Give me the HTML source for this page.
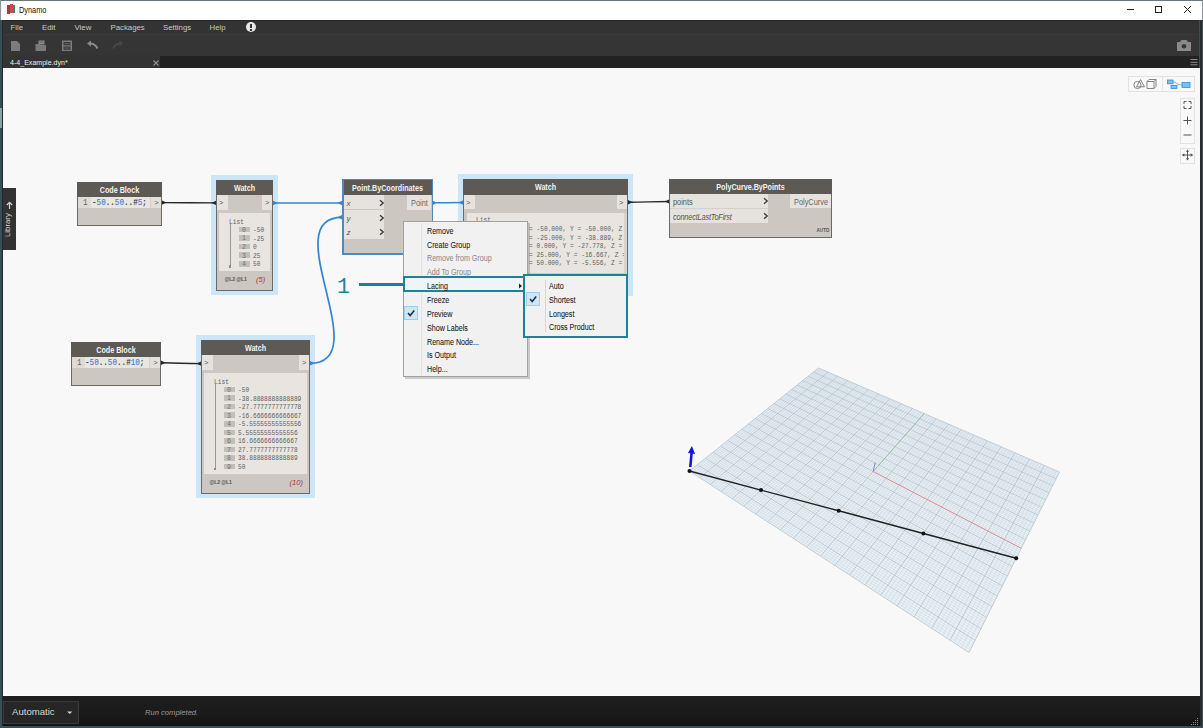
<!DOCTYPE html><html><head><meta charset="utf-8"><style>
*{margin:0;padding:0;box-sizing:border-box}
html,body{width:1203px;height:728px;overflow:hidden;background:#3b4d55;font-family:"Liberation Sans", sans-serif}
.a{position:absolute}
.t{position:absolute;white-space:nowrap;line-height:1}
.node{position:absolute;background:#ccc8c1;border:1px solid #6e6c69}
.hdr{position:absolute;left:0;top:0;right:0;background:#5d5a56;color:#f4f4f4;font-weight:bold;text-align:center;white-space:nowrap}
.port{position:absolute;background:#e6e3de;color:#555;white-space:nowrap}
.menu .it{position:absolute;left:24px;font-size:7.6px;color:#1a1a1a;white-space:nowrap;line-height:1}
</style></head><body>
<div class="a" style="left:0;top:0;width:1203px;height:20px;background:#fff;border-top:1px solid #6a7882;border-left:1px solid #8a98a2;border-right:1px solid #8a98a2"></div>
<div class="a" style="left:7px;top:5px;width:3px;height:9px;background:#b5343a"></div>
<div class="a" style="left:10px;top:4px;width:3px;height:9px;background:#c94b4f"></div>
<div class="a" style="left:13px;top:5px;width:2px;height:8px;background:#2f8a6a"></div>
<div class="t" style="left:19px;top:6.8px;font-size:8.2px;color:#111;transform-origin:0 0;transform:scaleX(0.9)">Dynamo</div>
<div class="a" style="left:1127px;top:9px;width:7px;height:1px;background:#222"></div>
<div class="a" style="left:1155px;top:6px;width:7px;height:7px;border:1px solid #222"></div>
<svg class="a" style="left:1183px;top:5px" width="9" height="9"><path d="M1 1L8 8M8 1L1 8" stroke="#222" stroke-width="1"/></svg>
<div class="a" style="left:3px;top:20px;width:1196px;height:14px;background:#333333"></div>
<div class="t" style="left:10.5px;top:23.5px;font-size:7.8px;color:#c8c8c8">File</div>
<div class="t" style="left:42px;top:23.5px;font-size:7.8px;color:#c8c8c8">Edit</div>
<div class="t" style="left:74.5px;top:23.5px;font-size:7.8px;color:#c8c8c8">View</div>
<div class="t" style="left:110.5px;top:23.5px;font-size:7.8px;color:#c8c8c8">Packages</div>
<div class="t" style="left:163px;top:23.5px;font-size:7.8px;color:#c8c8c8">Settings</div>
<div class="t" style="left:209.5px;top:23.5px;font-size:7.8px;color:#c8c8c8">Help</div>
<div class="a" style="left:246px;top:22px;width:10px;height:10px;border-radius:50%;background:#e8e8e8"></div>
<div class="a" style="left:250.3px;top:24px;width:1.6px;height:4px;background:#333"></div>
<div class="a" style="left:250.3px;top:29px;width:1.6px;height:1.5px;background:#333"></div>
<div class="a" style="left:3px;top:34px;width:1196px;height:22px;background:#353535"></div>
<div class="a" style="left:3px;top:34px;width:1196px;height:1px;background:#3b3b3b"></div>
<div class="a" style="left:3px;top:20px;width:1196px;height:1px;background:#262626"></div>
<svg class="a" style="left:0;top:34px" width="140" height="22"><path d="M11 7H17L20 10V17H11Z" fill="#7c7c7c"/><path d="M35.5 10H39.5L40.5 11H46V17H35.5Z" fill="#7a7a7a"/><path d="M38.5 6.5H44.5V10.5H38.5Z" fill="#8a8a8a"/><path d="M39.5 8H43.5" stroke="#555" stroke-width="0.7"/><rect x="62" y="6.5" width="10" height="10.5" fill="#7c7c7c"/><rect x="63.5" y="8" width="7" height="3.3" fill="#3a3a3a"/><rect x="63.5" y="12.5" width="7" height="3.3" fill="#3a3a3a"/><path d="M64.5 9.6H69.5M64.5 14.1H69.5" stroke="#6a6a6a" stroke-width="0.8"/><path d="M97.5 14.5C96 11 93 9.5 89.5 9.5" fill="none" stroke="#8a8a8a" stroke-width="2"/><path d="M87 9.5L91 6.5V12.5Z" fill="#8a8a8a"/><path d="M113 14.5C114.5 11 117.5 9.5 121 9.5" fill="none" stroke="#484848" stroke-width="2"/><path d="M123.5 9.5L119.5 6.5V12.5Z" fill="#484848"/></svg>
<svg class="a" style="left:1176px;top:39px" width="16" height="13"><path d="M1 3H4L5.5 1H10.5L12 3H15V12H1Z" fill="#8a8a8a"/><circle cx="8" cy="7.3" r="2.3" fill="#353535"/></svg>
<div class="a" style="left:3px;top:56px;width:1196px;height:12px;background:#222222"></div>
<div class="a" style="left:3px;top:55px;width:157px;height:13px;background:#333333"></div>
<div class="t" style="left:9.5px;top:58.8px;font-size:7.6px;color:#ececec;transform-origin:0 0;transform:scaleX(0.93)">4-4_Example.dyn*</div>
<svg class="a" style="left:151.5px;top:58.5px" width="8" height="8"><path d="M1.5 1.5L6.5 6.5M6.5 1.5L1.5 6.5" stroke="#909090" stroke-width="1.1"/></svg>
<svg class="a" style="left:1190px;top:58px" width="8" height="8"><path d="M0.5 1.5H7.5M0.5 4.3H7.5M0.5 6.8H7.5" stroke="#8c8c8c" stroke-width="1"/></svg>
<div class="a" style="left:3px;top:68px;width:1196.5px;height:628px;background:#f8f8f8;overflow:hidden">
</div>
<svg class="a" style="left:0;top:0" width="1203" height="728"><path d="M689.5 471.0L969.0 652.5L1059.5 472.0L818.5 368.0Z" fill="#eaf1f6"/><path d="M691.5 472.3L820.4 368.8M691.1 469.7L970.2 650.0M693.6 473.6L822.3 369.6M692.7 468.4L971.5 647.6M695.6 475.0L824.2 370.5M694.4 467.1L972.7 645.2M697.7 476.3L826.1 371.3M696.0 465.8L973.9 642.8M701.8 479.0L829.9 372.9M699.1 463.3L976.3 638.0M703.9 480.4L831.9 373.8M700.7 462.1L977.4 635.7M706.0 481.7L833.8 374.6M702.3 460.8L978.6 633.3M708.1 483.1L835.8 375.5M703.8 459.6L979.8 631.0M712.4 485.9L839.7 377.2M706.9 457.1L982.1 626.4M714.6 487.3L841.7 378.0M708.5 455.9L983.2 624.2M716.7 488.7L843.7 378.9M710.0 454.6L984.3 621.9M718.9 490.1L845.7 379.7M711.5 453.4L985.5 619.7M723.3 493.0L849.7 381.5M714.5 451.0L987.7 615.3M725.5 494.4L851.7 382.3M716.0 449.8L988.8 613.1M727.8 495.9L853.8 383.2M717.5 448.6L989.9 610.9M730.0 497.3L855.8 384.1M719.0 447.4L991.0 608.7M734.5 500.2L859.9 385.9M721.9 445.1L993.1 604.4M736.8 501.7L862.0 386.8M723.4 443.9L994.2 602.3M739.1 503.2L864.1 387.7M724.9 442.8L995.2 600.2M741.4 504.7L866.2 388.6M726.3 441.6L996.3 598.1M746.1 507.8L870.4 390.4M729.2 439.3L998.3 594.0M748.5 509.3L872.5 391.3M730.6 438.2L999.4 591.9M750.8 510.8L874.6 392.2M732.0 437.1L1000.4 589.9M753.2 512.4L876.8 393.1M733.4 435.9L1001.4 587.9M758.0 515.5L881.1 395.0M736.2 433.7L1003.4 583.9M760.4 517.1L883.2 395.9M737.6 432.6L1004.4 581.9M762.9 518.6L885.4 396.9M739.0 431.5L1005.4 579.9M765.3 520.2L887.6 397.8M740.4 430.4L1006.4 578.0M770.3 523.5L892.0 399.7M743.1 428.2L1008.3 574.1M772.8 525.1L894.3 400.7M744.5 427.1L1009.3 572.2M775.3 526.7L896.5 401.7M745.8 426.0L1010.2 570.3M777.8 528.4L898.7 402.6M747.2 425.0L1011.2 568.4M782.9 531.7L903.3 404.6M749.8 422.8L1013.1 564.6M785.5 533.4L905.5 405.6M751.1 421.8L1014.0 562.8M788.1 535.0L907.8 406.5M752.5 420.7L1014.9 560.9M790.7 536.7L910.1 407.5M753.8 419.7L1015.8 559.1M796.0 540.2L914.8 409.5M756.4 417.6L1017.7 555.5M798.7 541.9L917.1 410.5M757.7 416.6L1018.6 553.7M801.3 543.6L919.4 411.6M759.0 415.5L1019.5 551.9M804.0 545.4L921.8 412.6M760.2 414.5L1020.3 550.1M809.5 548.9L926.5 414.6M762.8 412.5L1022.1 546.6M812.2 550.7L928.9 415.7M764.1 411.5L1023.0 544.8M815.0 552.5L931.3 416.7M765.3 410.5L1023.9 543.1M817.8 554.3L933.7 417.7M766.6 409.5L1024.7 541.4M823.4 558.0L938.6 419.8M769.0 407.5L1026.4 537.9M826.3 559.8L941.1 420.9M770.3 406.5L1027.3 536.2M829.1 561.7L943.5 422.0M771.5 405.5L1028.1 534.6M832.0 563.5L946.0 423.0M772.7 404.5L1029.0 532.9M837.8 567.3L951.0 425.2M775.2 402.6L1030.6 529.6M840.7 569.2L953.5 426.3M776.4 401.6L1031.5 527.9M843.7 571.1L956.0 427.3M777.6 400.7L1032.3 526.3M846.7 573.1L958.6 428.4M778.8 399.7L1033.1 524.7M852.7 577.0L963.7 430.7M781.1 397.8L1034.7 521.5M855.7 578.9L966.3 431.8M782.3 396.9L1035.5 519.9M858.8 580.9L968.9 432.9M783.5 395.9L1036.3 518.3M861.9 582.9L971.5 434.0M784.7 395.0L1037.1 516.7M868.1 587.0L976.7 436.3M787.0 393.2L1038.7 513.6M871.2 589.0L979.4 437.4M788.1 392.2L1039.4 512.0M874.4 591.1L982.0 438.6M789.3 391.3L1040.2 510.5M877.6 593.1L984.7 439.7M790.4 390.4L1041.0 508.9M884.0 597.3L990.1 442.0M792.7 388.6L1042.5 505.9M887.3 599.4L992.8 443.2M793.8 387.7L1043.3 504.4M890.5 601.5L995.5 444.4M795.0 386.8L1044.0 502.9M893.8 603.7L998.3 445.6M796.1 385.9L1044.7 501.4M900.5 608.0L1003.8 448.0M798.3 384.1L1046.2 498.5M903.9 610.2L1006.6 449.2M799.4 383.2L1047.0 497.0M907.3 612.4L1009.4 450.4M800.5 382.4L1047.7 495.5M910.7 614.6L1012.2 451.6M801.6 381.5L1048.4 494.1M917.6 619.1L1017.9 454.1M803.8 379.8L1049.9 491.2M921.1 621.4L1020.8 455.3M804.9 378.9L1050.6 489.8M924.6 623.7L1023.7 456.5M805.9 378.0L1051.3 488.4M928.2 626.0L1026.6 457.8M807.0 377.2L1052.0 487.0M935.4 630.7L1032.4 460.3M809.1 375.5L1053.4 484.2M939.0 633.0L1035.3 461.6M810.2 374.6L1054.1 482.8M942.6 635.4L1038.3 462.9M811.2 373.8L1054.8 481.4M946.3 637.8L1041.3 464.1M812.3 373.0L1055.5 480.1M953.8 642.6L1047.3 466.7M814.4 371.3L1056.8 477.3M957.5 645.1L1050.3 468.0M815.4 370.5L1057.5 476.0M961.3 647.5L1053.4 469.4M816.5 369.6L1058.2 474.7M965.1 650.0L1056.4 470.7M817.5 368.8L1058.8 473.3" stroke="#c4d2dc" stroke-width="0.42" fill="none"/><path d="M689.5 471.0L818.5 368.0M689.5 471.0L969.0 652.5M699.7 477.7L828.0 372.1M697.5 464.6L975.1 640.4M710.3 484.5L837.7 376.3M705.4 458.3L980.9 628.7M721.1 491.5L847.7 380.6M713.0 452.2L986.6 617.5M732.3 498.8L857.9 385.0M720.5 446.3L992.0 606.6M743.8 506.2L868.3 389.5M727.7 440.5L997.3 596.1M755.6 513.9L878.9 394.1M734.8 434.8L1002.4 585.9M767.8 521.8L889.8 398.8M741.7 429.3L1007.3 576.0M780.4 530.0L901.0 403.6M748.5 423.9L1012.1 566.5M793.4 538.4L912.4 408.5M755.1 418.6L1016.7 557.3M806.8 547.1L924.2 413.6M761.5 413.5L1021.2 548.3M820.6 556.1L936.2 418.8M767.8 408.5L1025.6 539.6M834.9 565.4L948.5 424.1M774.0 403.6L1029.8 531.2M849.7 575.0L961.1 429.5M780.0 398.8L1033.9 523.1M865.0 584.9L974.1 435.1M785.8 394.1L1037.9 515.1M880.8 595.2L987.4 440.9M791.6 389.5L1041.7 507.4M897.2 605.9L1001.0 446.8M797.2 385.0L1045.5 499.9M914.1 616.9L1015.1 452.8M802.7 380.6L1049.1 492.7M931.8 628.3L1029.5 459.0M808.1 376.3L1052.7 485.6M950.0 640.2L1044.3 465.4M813.3 372.1L1056.1 478.7M969.0 652.5L1059.5 472.0M818.5 368.0L1059.5 472.0" stroke="#a2b2be" stroke-width="0.6" fill="none"/><path d="M873.2 471.5L1021.2 548.3" stroke="#ee7b7b" stroke-width="0.75"/><path d="M873.2 471.5L924.2 413.6" stroke="#86b98a" stroke-width="0.7"/><path d="M873.2 471.5L875.2 462.5" stroke="#6b7fd0" stroke-width="0.9"/><path d="M689.5 471.0L761.0 490.1L838.7 510.8L923.4 533.5L1016.2 558.3" stroke="#222" stroke-width="1.4" fill="none"/><circle cx="689.5" cy="471.0" r="2" fill="#111"/><circle cx="761.0" cy="490.1" r="2" fill="#111"/><circle cx="838.7" cy="510.8" r="2" fill="#111"/><circle cx="923.4" cy="533.5" r="2" fill="#111"/><circle cx="1016.2" cy="558.3" r="2" fill="#111"/><path d="M690.3 467.0L691.7 452.0" stroke="#1414d8" stroke-width="2.6"/><path d="M688.0 453.0L691.9 446.0L695.0 454.0Z" fill="#1414d8"/></svg>
<div class="a" style="left:211px;top:174.5px;width:67px;height:120.5px;background:#cbe6f8"></div>
<div class="a" style="left:196px;top:334.8px;width:119px;height:163.6px;background:#cbe6f8"></div>
<div class="a" style="left:457.5px;top:173.5px;width:175.5px;height:122px;background:#cbe6f8"></div>
<svg class="a" style="left:0;top:0" width="1203" height="728"><path d="M162.0 202.6C186.3 202.6 191.7 202.9 216.0 202.9" stroke="#272727" stroke-width="1.4" fill="none"/><path d="M273.0 203.0C304.1 203.0 310.9 203.0 342.0 203.0" stroke="#3584d2" stroke-width="1.5" fill="none"/><path d="M310.0 363.3C377.3 363.3 274.7 217.3 342.0 217.3" stroke="#3584d2" stroke-width="1.7" fill="none"/><path d="M432.5 202.8C446.2 202.8 449.3 202.6 463.0 202.6" stroke="#3584d2" stroke-width="1.5" fill="none"/><path d="M628.0 202.3C646.7 202.3 650.8 201.5 669.5 201.5" stroke="#272727" stroke-width="1.4" fill="none"/><path d="M161.0 362.8C179.0 362.8 183.0 363.6 201.0 363.6" stroke="#272727" stroke-width="1.4" fill="none"/><path d="M162.0 200.4L162.0 204.8L166.5 202.6Z" fill="#272727"/><path d="M216.0 200.7L216.0 205.1L211.5 202.9Z" fill="#272727"/><path d="M628.0 200.1L628.0 204.5L632.5 202.3Z" fill="#272727"/><path d="M669.5 199.3L669.5 203.7L665.0 201.5Z" fill="#272727"/><path d="M161.0 360.6L161.0 365.0L165.5 362.8Z" fill="#272727"/><path d="M201.0 361.4L201.0 365.8L196.5 363.6Z" fill="#272727"/><path d="M273.0 200.8L273.0 205.2L277.5 203.0Z" fill="#3584d2"/><path d="M342.0 200.8L342.0 205.2L337.5 203.0Z" fill="#3584d2"/><path d="M310.0 361.1L310.0 365.5L314.5 363.3Z" fill="#3584d2"/><path d="M342.0 215.1L342.0 219.5L337.5 217.3Z" fill="#3584d2"/><path d="M432.5 200.6L432.5 205.0L437.0 202.8Z" fill="#3584d2"/><path d="M463.0 200.4L463.0 204.8L458.5 202.6Z" fill="#3584d2"/></svg>
<div class="a" style="left:77.0px;top:182.0px;width:85.0px;height:44.0px;background:#6c6a67;"></div><div class="a" style="left:78.0px;top:183.0px;width:83.0px;height:42.0px;background:#ccc8c1;"></div><div class="a" style="left:77.0px;top:182.0px;width:85.0px;height:15.0px;background:#5d5a56;"></div><div class="t" style="left:77.0px;top:186.2px;width:85.0px;text-align:center;font-size:8.40px;color:#f2f2f2;font-weight:bold;transform:scaleX(0.855)">Code Block</div><div class="a" style="left:78.0px;top:197.0px;width:83.0px;height:11.0px;background:#e9e6e1;"></div><div class="a" style="left:78.0px;top:197.0px;width:13.0px;height:11.0px;background:#dedad4;"></div><div class="a" style="left:151.0px;top:197.0px;width:10.0px;height:11.0px;background:#e3e0db;"></div><div class="a" style="left:150.0px;top:197.0px;width:1.0px;height:11.0px;background:#d2cec8;"></div><div class="t" style="left:83.2px;top:199.4px;font-size:8.20px;color:#666;font-family:'Liberation Mono',monospace;transform-origin:0 0;transform:scaleX(0.93)">1</div><div class="t" style="left:91.5px;top:199.4px;font-size:8.20px;color:#333;font-family:'Liberation Mono',monospace;transform-origin:0 0;transform:scaleX(0.93);-webkit-text-stroke:0.12px #444">-<span style="color:#4a80cc;-webkit-text-stroke:0.12px #4a80cc">50</span>..<span style="color:#4a80cc;-webkit-text-stroke:0.12px #4a80cc">50</span>..#<span style="color:#4a80cc;-webkit-text-stroke:0.12px #4a80cc">5</span>;</div><div class="t" style="left:154.2px;top:199.3px;font-size:7.50px;color:#555;">&gt;</div>
<div class="a" style="left:71.0px;top:342.0px;width:90.0px;height:44.0px;background:#6c6a67;"></div><div class="a" style="left:72.0px;top:343.0px;width:88.0px;height:42.0px;background:#ccc8c1;"></div><div class="a" style="left:71.0px;top:342.0px;width:90.0px;height:15.0px;background:#5d5a56;"></div><div class="t" style="left:71.0px;top:346.2px;width:90.0px;text-align:center;font-size:8.40px;color:#f2f2f2;font-weight:bold;transform:scaleX(0.855)">Code Block</div><div class="a" style="left:72.0px;top:357.0px;width:88.0px;height:11.0px;background:#e9e6e1;"></div><div class="a" style="left:72.0px;top:357.0px;width:12.5px;height:11.0px;background:#dedad4;"></div><div class="a" style="left:150.0px;top:357.0px;width:10.0px;height:11.0px;background:#e3e0db;"></div><div class="a" style="left:149.0px;top:357.0px;width:1.0px;height:11.0px;background:#d2cec8;"></div><div class="t" style="left:77.2px;top:359.4px;font-size:8.20px;color:#666;font-family:'Liberation Mono',monospace;transform-origin:0 0;transform:scaleX(0.93)">1</div><div class="t" style="left:85.0px;top:359.4px;font-size:8.20px;color:#333;font-family:'Liberation Mono',monospace;transform-origin:0 0;transform:scaleX(0.93);-webkit-text-stroke:0.12px #444">-<span style="color:#4a80cc;-webkit-text-stroke:0.12px #4a80cc">50</span>..<span style="color:#4a80cc;-webkit-text-stroke:0.12px #4a80cc">50</span>..#<span style="color:#4a80cc;-webkit-text-stroke:0.12px #4a80cc">10</span>;</div><div class="t" style="left:153.2px;top:359.3px;font-size:7.50px;color:#555;">&gt;</div>
<div class="a" style="left:216.0px;top:180.0px;width:57.0px;height:110.5px;background:#6c6a67;"></div><div class="a" style="left:217.0px;top:181.0px;width:55.0px;height:108.5px;background:#ccc8c1;"></div><div class="a" style="left:216.0px;top:180.0px;width:57.0px;height:15.0px;background:#5d5a56;"></div><div class="t" style="left:216.0px;top:184.2px;width:57.0px;text-align:center;font-size:8.40px;color:#f2f2f2;font-weight:bold;transform:scaleX(0.85)">Watch</div><div class="a" style="left:217.0px;top:195.0px;width:10.5px;height:14.5px;background:#e6e3de;"></div><div class="a" style="left:261.5px;top:195.0px;width:10.5px;height:14.5px;background:#e6e3de;"></div><div class="t" style="left:219.0px;top:199.0px;font-size:7.50px;color:#555;">&gt;</div><div class="t" style="left:265.0px;top:199.0px;font-size:7.50px;color:#555;">&gt;</div><div class="a" style="left:219.0px;top:213.0px;width:51.0px;height:58.0px;background:#e8e5e1;"></div><div class="t" style="left:229.0px;top:219.3px;font-size:7.40px;color:#606060;font-family:'Liberation Mono',monospace;transform-origin:0 0;transform:scaleX(0.84)">List</div><div class="a" style="left:229.6px;top:224.0px;width:0.7px;height:42.4px;background:#9a9794;"></div><div class="a" style="left:228.9px;top:265.4px;width:2.2px;height:2.2px;background:#888;"></div><div class="a" style="left:238.5px;top:226.8px;width:11.0px;height:5.6px;background:#c2beb8;"></div><div class="t" style="left:242.1px;top:227.9px;font-size:6.60px;color:#727272;font-family:'Liberation Mono',monospace">0</div><div class="t" style="left:252.5px;top:227.0px;font-size:7.40px;color:#606060;font-family:'Liberation Mono',monospace;transform-origin:0 0;transform:scaleX(0.84)">-50</div><div class="a" style="left:238.5px;top:235.3px;width:11.0px;height:5.6px;background:#c2beb8;"></div><div class="t" style="left:242.1px;top:236.4px;font-size:6.60px;color:#727272;font-family:'Liberation Mono',monospace">1</div><div class="t" style="left:252.5px;top:235.6px;font-size:7.40px;color:#606060;font-family:'Liberation Mono',monospace;transform-origin:0 0;transform:scaleX(0.84)">-25</div><div class="a" style="left:238.5px;top:243.9px;width:11.0px;height:5.6px;background:#c2beb8;"></div><div class="t" style="left:242.1px;top:245.0px;font-size:6.60px;color:#727272;font-family:'Liberation Mono',monospace">2</div><div class="t" style="left:252.5px;top:244.1px;font-size:7.40px;color:#606060;font-family:'Liberation Mono',monospace;transform-origin:0 0;transform:scaleX(0.84)">0</div><div class="a" style="left:238.5px;top:252.4px;width:11.0px;height:5.6px;background:#c2beb8;"></div><div class="t" style="left:242.1px;top:253.5px;font-size:6.60px;color:#727272;font-family:'Liberation Mono',monospace">3</div><div class="t" style="left:252.5px;top:252.7px;font-size:7.40px;color:#606060;font-family:'Liberation Mono',monospace;transform-origin:0 0;transform:scaleX(0.84)">25</div><div class="a" style="left:238.5px;top:261.0px;width:11.0px;height:5.6px;background:#c2beb8;"></div><div class="t" style="left:242.1px;top:262.1px;font-size:6.60px;color:#727272;font-family:'Liberation Mono',monospace">4</div><div class="t" style="left:252.5px;top:261.2px;font-size:7.40px;color:#606060;font-family:'Liberation Mono',monospace;transform-origin:0 0;transform:scaleX(0.84)">50</div><div class="t" style="left:224.5px;top:277.3px;font-size:5.20px;color:#555;font-weight:bold;letter-spacing:-0.2px">@L2 @L1</div><div class="t" style="left:256.0px;top:275.6px;font-size:7.60px;color:#a33;font-style:italic">(5)</div>
<div class="a" style="left:201.0px;top:340.0px;width:109.0px;height:153.5px;background:#6c6a67;"></div><div class="a" style="left:202.0px;top:341.0px;width:107.0px;height:151.5px;background:#ccc8c1;"></div><div class="a" style="left:201.0px;top:340.0px;width:109.0px;height:15.0px;background:#5d5a56;"></div><div class="t" style="left:201.0px;top:344.2px;width:109.0px;text-align:center;font-size:8.40px;color:#f2f2f2;font-weight:bold;transform:scaleX(0.85)">Watch</div><div class="a" style="left:202.0px;top:355.0px;width:10.5px;height:14.5px;background:#e6e3de;"></div><div class="a" style="left:298.5px;top:355.0px;width:10.5px;height:14.5px;background:#e6e3de;"></div><div class="t" style="left:204.0px;top:359.0px;font-size:7.50px;color:#555;">&gt;</div><div class="t" style="left:302.0px;top:359.0px;font-size:7.50px;color:#555;">&gt;</div><div class="a" style="left:204.0px;top:373.0px;width:103.0px;height:101.0px;background:#e8e5e1;"></div><div class="t" style="left:214.0px;top:379.3px;font-size:7.40px;color:#606060;font-family:'Liberation Mono',monospace;transform-origin:0 0;transform:scaleX(0.84)">List</div><div class="a" style="left:214.6px;top:384.0px;width:0.7px;height:85.2px;background:#9a9794;"></div><div class="a" style="left:213.9px;top:468.1px;width:2.2px;height:2.2px;background:#888;"></div><div class="a" style="left:223.5px;top:386.8px;width:11.0px;height:5.6px;background:#c2beb8;"></div><div class="t" style="left:227.1px;top:387.9px;font-size:6.60px;color:#727272;font-family:'Liberation Mono',monospace">0</div><div class="t" style="left:237.5px;top:387.0px;font-size:7.40px;color:#606060;font-family:'Liberation Mono',monospace;transform-origin:0 0;transform:scaleX(0.84)">-50</div><div class="a" style="left:223.5px;top:395.4px;width:11.0px;height:5.6px;background:#c2beb8;"></div><div class="t" style="left:227.1px;top:396.4px;font-size:6.60px;color:#727272;font-family:'Liberation Mono',monospace">1</div><div class="t" style="left:237.5px;top:395.6px;font-size:7.40px;color:#606060;font-family:'Liberation Mono',monospace;transform-origin:0 0;transform:scaleX(0.84)">-38.8888888888889</div><div class="a" style="left:223.5px;top:403.9px;width:11.0px;height:5.6px;background:#c2beb8;"></div><div class="t" style="left:227.1px;top:405.0px;font-size:6.60px;color:#727272;font-family:'Liberation Mono',monospace">2</div><div class="t" style="left:237.5px;top:404.1px;font-size:7.40px;color:#606060;font-family:'Liberation Mono',monospace;transform-origin:0 0;transform:scaleX(0.84)">-27.7777777777778</div><div class="a" style="left:223.5px;top:412.4px;width:11.0px;height:5.6px;background:#c2beb8;"></div><div class="t" style="left:227.1px;top:413.5px;font-size:6.60px;color:#727272;font-family:'Liberation Mono',monospace">3</div><div class="t" style="left:237.5px;top:412.6px;font-size:7.40px;color:#606060;font-family:'Liberation Mono',monospace;transform-origin:0 0;transform:scaleX(0.84)">-16.6666666666667</div><div class="a" style="left:223.5px;top:421.0px;width:11.0px;height:5.6px;background:#c2beb8;"></div><div class="t" style="left:227.1px;top:422.1px;font-size:6.60px;color:#727272;font-family:'Liberation Mono',monospace">4</div><div class="t" style="left:237.5px;top:421.2px;font-size:7.40px;color:#606060;font-family:'Liberation Mono',monospace;transform-origin:0 0;transform:scaleX(0.84)">-5.55555555555556</div><div class="a" style="left:223.5px;top:429.6px;width:11.0px;height:5.6px;background:#c2beb8;"></div><div class="t" style="left:227.1px;top:430.6px;font-size:6.60px;color:#727272;font-family:'Liberation Mono',monospace">5</div><div class="t" style="left:237.5px;top:429.8px;font-size:7.40px;color:#606060;font-family:'Liberation Mono',monospace;transform-origin:0 0;transform:scaleX(0.84)">5.55555555555556</div><div class="a" style="left:223.5px;top:438.1px;width:11.0px;height:5.6px;background:#c2beb8;"></div><div class="t" style="left:227.1px;top:439.2px;font-size:6.60px;color:#727272;font-family:'Liberation Mono',monospace">6</div><div class="t" style="left:237.5px;top:438.3px;font-size:7.40px;color:#606060;font-family:'Liberation Mono',monospace;transform-origin:0 0;transform:scaleX(0.84)">16.6666666666667</div><div class="a" style="left:223.5px;top:446.7px;width:11.0px;height:5.6px;background:#c2beb8;"></div><div class="t" style="left:227.1px;top:447.8px;font-size:6.60px;color:#727272;font-family:'Liberation Mono',monospace">7</div><div class="t" style="left:237.5px;top:446.9px;font-size:7.40px;color:#606060;font-family:'Liberation Mono',monospace;transform-origin:0 0;transform:scaleX(0.84)">27.7777777777778</div><div class="a" style="left:223.5px;top:455.2px;width:11.0px;height:5.6px;background:#c2beb8;"></div><div class="t" style="left:227.1px;top:456.3px;font-size:6.60px;color:#727272;font-family:'Liberation Mono',monospace">8</div><div class="t" style="left:237.5px;top:455.4px;font-size:7.40px;color:#606060;font-family:'Liberation Mono',monospace;transform-origin:0 0;transform:scaleX(0.84)">38.8888888888889</div><div class="a" style="left:223.5px;top:463.8px;width:11.0px;height:5.6px;background:#c2beb8;"></div><div class="t" style="left:227.1px;top:464.8px;font-size:6.60px;color:#727272;font-family:'Liberation Mono',monospace">9</div><div class="t" style="left:237.5px;top:463.9px;font-size:7.40px;color:#606060;font-family:'Liberation Mono',monospace;transform-origin:0 0;transform:scaleX(0.84)">50</div><div class="t" style="left:209.5px;top:480.3px;font-size:5.20px;color:#555;font-weight:bold;letter-spacing:-0.2px">@L2 @L1</div><div class="t" style="left:289.5px;top:478.6px;font-size:7.60px;color:#a33;font-style:italic">(10)</div>
<div class="a" style="left:463.0px;top:179.0px;width:165.0px;height:110.0px;background:#6c6a67;"></div><div class="a" style="left:464.0px;top:180.0px;width:163.0px;height:108.0px;background:#ccc8c1;"></div><div class="a" style="left:463.0px;top:179.0px;width:165.0px;height:15.7px;background:#5d5a56;"></div><div class="t" style="left:463.0px;top:183.3px;width:165.0px;text-align:center;font-size:8.40px;color:#f2f2f2;font-weight:bold;transform:scaleX(0.85)">Watch</div><div class="a" style="left:464.0px;top:194.7px;width:10.5px;height:14.0px;background:#e6e3de;"></div><div class="a" style="left:616.5px;top:194.7px;width:10.5px;height:14.0px;background:#e6e3de;"></div><div class="t" style="left:466.0px;top:198.5px;font-size:7.50px;color:#555;">&gt;</div><div class="t" style="left:619.0px;top:198.5px;font-size:7.50px;color:#555;">&gt;</div><div class="a" style="left:466.5px;top:212.8px;width:158.0px;height:60.0px;background:#e8e5e1;"></div><div class="t" style="left:475.5px;top:217.3px;font-size:7.40px;color:#606060;font-family:'Liberation Mono',monospace;transform-origin:0 0;transform:scaleX(0.84)">List</div><div class="a" style="left:466.5px;top:212.8px;width:157px;height:60px;overflow:hidden"><div class="t" style="left:62.6px;top:13.3px;font-size:7.40px;color:#606060;font-family:'Liberation Mono',monospace;transform-origin:0 0;transform:scaleX(0.84)">= -50.000, Y = -50.000, Z = 0.000)</div><div class="t" style="left:62.6px;top:21.8px;font-size:7.40px;color:#606060;font-family:'Liberation Mono',monospace;transform-origin:0 0;transform:scaleX(0.84)">= -25.000, Y = -38.889, Z = 0.000)</div><div class="t" style="left:62.6px;top:30.3px;font-size:7.40px;color:#606060;font-family:'Liberation Mono',monospace;transform-origin:0 0;transform:scaleX(0.84)">= 0.000, Y = -27.778, Z = 0.000)</div><div class="t" style="left:62.6px;top:38.8px;font-size:7.40px;color:#606060;font-family:'Liberation Mono',monospace;transform-origin:0 0;transform:scaleX(0.84)">= 25.000, Y = -16.667, Z = 0.000)</div><div class="t" style="left:62.6px;top:47.3px;font-size:7.40px;color:#606060;font-family:'Liberation Mono',monospace;transform-origin:0 0;transform:scaleX(0.84)">= 50.000, Y = -5.556, Z = 0.000)</div></div><div class="a" style="left:623.5px;top:212.8px;width:3.0px;height:60.0px;background:#d8d4ce;"></div>
<div class="a" style="left:342.0px;top:179.0px;width:91.0px;height:75.5px;background:#5088bf;"></div><div class="a" style="left:343.5px;top:180.2px;width:88.0px;height:72.8px;background:#ccc8c1;"></div><div class="a" style="left:343.5px;top:180.2px;width:88.0px;height:14.8px;background:#5d5a56;"></div><div class="t" style="left:342.0px;top:184.0px;width:91.0px;text-align:center;font-size:8.40px;color:#f2f2f2;font-weight:bold;transform:scaleX(0.855)">Point.ByCoordinates</div><div class="a" style="left:344.0px;top:195.0px;width:40.0px;height:14.2px;background:#e6e3de;"></div><div class="t" style="left:346.5px;top:199.8px;font-size:8.00px;color:#555;font-style:italic">x</div><svg class="a" style="left:378.5px;top:198.8px" width="6" height="8"><path d="M1 1.2L4.2 4L1 6.8" stroke="#3a3a3a" stroke-width="1.35" fill="none"/></svg><div class="a" style="left:344.0px;top:209.7px;width:40.0px;height:14.2px;background:#e6e3de;"></div><div class="t" style="left:346.5px;top:214.5px;font-size:8.00px;color:#555;font-style:italic">y</div><svg class="a" style="left:378.5px;top:213.5px" width="6" height="8"><path d="M1 1.2L4.2 4L1 6.8" stroke="#3a3a3a" stroke-width="1.35" fill="none"/></svg><div class="a" style="left:344.0px;top:224.4px;width:40.0px;height:14.2px;background:#e6e3de;"></div><div class="t" style="left:346.5px;top:229.2px;font-size:8.00px;color:#555;font-style:italic">z</div><svg class="a" style="left:378.5px;top:228.2px" width="6" height="8"><path d="M1 1.2L4.2 4L1 6.8" stroke="#3a3a3a" stroke-width="1.35" fill="none"/></svg><div class="a" style="left:407.0px;top:195.0px;width:24.0px;height:14.5px;background:#e6e3de;"></div><div class="t" style="left:410.6px;top:199.8px;font-size:8.20px;color:#666;transform-origin:0 0;transform:scaleX(0.9)">Point</div>
<div class="a" style="left:669.0px;top:178.5px;width:163.0px;height:59.5px;background:#6c6a67;"></div><div class="a" style="left:670.0px;top:179.5px;width:161.0px;height:57.5px;background:#ccc8c1;"></div><div class="a" style="left:669.0px;top:178.5px;width:163.0px;height:15.2px;background:#5d5a56;"></div><div class="t" style="left:669.0px;top:182.6px;width:163.0px;text-align:center;font-size:8.40px;color:#f2f2f2;font-weight:bold;transform:scaleX(0.855)">PolyCurve.ByPoints</div><div class="a" style="left:670.0px;top:193.7px;width:97.5px;height:14.5px;background:#e6e3de;"></div><div class="a" style="left:670.0px;top:208.5px;width:97.5px;height:14.5px;background:#e6e3de;"></div><div class="a" style="left:670.0px;top:208.0px;width:97.5px;height:0.6px;background:#d3cfc9;"></div><div class="t" style="left:672.5px;top:199.4px;font-size:8.20px;color:#555;transform-origin:0 0;transform:scaleX(0.9)">points</div><div class="t" style="left:672.5px;top:213.6px;font-size:8.20px;color:#555;font-style:italic;letter-spacing:-0.2px;transform-origin:0 0;transform:scaleX(0.9)">connectLastToFirst</div><svg class="a" style="left:762.5px;top:197.2px" width="6" height="8"><path d="M1 1.2L4.2 4L1 6.8" stroke="#3a3a3a" stroke-width="1.35" fill="none"/></svg><svg class="a" style="left:762.5px;top:212.2px" width="6" height="8"><path d="M1 1.2L4.2 4L1 6.8" stroke="#3a3a3a" stroke-width="1.35" fill="none"/></svg><div class="a" style="left:790.3px;top:193.7px;width:40.7px;height:14.5px;background:#e6e3de;"></div><div class="t" style="left:793.5px;top:199.4px;font-size:8.20px;color:#666;transform-origin:0 0;transform:scaleX(0.9)">PolyCurve</div><div class="t" style="left:816.5px;top:228.5px;font-size:4.60px;color:#555;font-weight:bold">AUTO</div>
<div class="t" style="left:337.0px;top:277.4px;font-size:21.50px;color:#1f8299;font-family:'Liberation Mono',monospace">1</div>
<div class="a" style="left:359.0px;top:283.4px;width:44.0px;height:2.6px;background:#1580a0;"></div>
<div class="a" style="left:404.5px;top:223.0px;width:125.5px;height:155.5px;background:rgba(0,0,0,0.18);"></div><div class="a" style="left:402.5px;top:221.2px;width:125.5px;height:155.6px;background:#a0a0a0;"></div><div class="a" style="left:403.5px;top:222.2px;width:123.5px;height:153.6px;background:#f1f1f1;"></div><div class="a" style="left:421.2px;top:224.0px;width:1.0px;height:151.0px;background:#e2e2e2;"></div><div class="a" style="left:402.5px;top:276.2px;width:122.5px;height:16.3px;background:#1a8397;"></div><div class="a" style="left:404.5px;top:278.2px;width:118.5px;height:12.3px;background:#eef4f8;"></div><div class="t" style="left:426.8px;top:226.7px;font-size:8.30px;color:#1b1b1b;transform-origin:0 0;transform:scaleX(0.86);-webkit-text-stroke:0.07px #1b1b1b">Remove</div><div class="t" style="left:426.8px;top:240.6px;font-size:8.30px;color:#1b1b1b;transform-origin:0 0;transform:scaleX(0.86);-webkit-text-stroke:0.07px #1b1b1b">Create Group</div><div class="t" style="left:426.8px;top:254.4px;font-size:8.30px;color:#8d8d8d;transform-origin:0 0;transform:scaleX(0.86);-webkit-text-stroke:0.07px #8d8d8d">Remove from Group</div><div class="t" style="left:426.8px;top:268.2px;font-size:8.30px;color:#8d8d8d;transform-origin:0 0;transform:scaleX(0.86);-webkit-text-stroke:0.07px #8d8d8d">Add To Group</div><div class="t" style="left:426.8px;top:281.9px;font-size:8.30px;color:#1b1b1b;transform-origin:0 0;transform:scaleX(0.86);-webkit-text-stroke:0.07px #1b1b1b">Lacing</div><div class="t" style="left:426.8px;top:295.8px;font-size:8.30px;color:#1b1b1b;transform-origin:0 0;transform:scaleX(0.86);-webkit-text-stroke:0.07px #1b1b1b">Freeze</div><div class="t" style="left:426.8px;top:309.7px;font-size:8.30px;color:#1b1b1b;transform-origin:0 0;transform:scaleX(0.86);-webkit-text-stroke:0.07px #1b1b1b">Preview</div><div class="t" style="left:426.8px;top:323.8px;font-size:8.30px;color:#1b1b1b;transform-origin:0 0;transform:scaleX(0.86);-webkit-text-stroke:0.07px #1b1b1b">Show Labels</div><div class="t" style="left:426.8px;top:337.5px;font-size:8.30px;color:#1b1b1b;transform-origin:0 0;transform:scaleX(0.86);-webkit-text-stroke:0.07px #1b1b1b">Rename Node...</div><div class="t" style="left:426.8px;top:351.2px;font-size:8.30px;color:#1b1b1b;transform-origin:0 0;transform:scaleX(0.86);-webkit-text-stroke:0.07px #1b1b1b">Is Output</div><div class="t" style="left:426.8px;top:364.9px;font-size:8.30px;color:#1b1b1b;transform-origin:0 0;transform:scaleX(0.86);-webkit-text-stroke:0.07px #1b1b1b">Help...</div><svg class="a" style="left:518px;top:283px" width="5" height="6"><path d="M1 0.5L4 3L1 5.5Z" fill="#222"/></svg><div class="a" style="left:404.2px;top:306.3px;width:14.0px;height:13.5px;background:#9fcdec;"></div><div class="a" style="left:405.2px;top:307.3px;width:12.0px;height:11.5px;background:#cfe6f6;"></div><svg class="a" style="left:406px;top:308px" width="10" height="10"><path d="M2 5L4.2 7.5L8.2 2.5" stroke="#1c2a40" stroke-width="1.5" fill="none"/></svg>
<div class="a" style="left:523.2px;top:273.9px;width:104.6px;height:64.1px;background:#1a8397;"></div><div class="a" style="left:525.4px;top:276.1px;width:100.2px;height:59.7px;background:#f1f1f1;"></div><div class="a" style="left:544.6px;top:280.0px;width:1.0px;height:52.0px;background:#d6d6d6;"></div><div class="a" style="left:526.3px;top:292.1px;width:13.7px;height:13.9px;background:#9fcdec;"></div><div class="a" style="left:527.3px;top:293.1px;width:11.7px;height:11.9px;background:#cfe6f6;"></div><svg class="a" style="left:528px;top:294px" width="10" height="10"><path d="M2 5L4.2 7.5L8.2 2.5" stroke="#1c2a40" stroke-width="1.5" fill="none"/></svg><div class="t" style="left:548.5px;top:281.9px;font-size:8.30px;color:#1b1b1b;transform-origin:0 0;transform:scaleX(0.86);-webkit-text-stroke:0.07px #1b1b1b">Auto</div><div class="t" style="left:548.5px;top:295.8px;font-size:8.30px;color:#1b1b1b;transform-origin:0 0;transform:scaleX(0.86);-webkit-text-stroke:0.07px #1b1b1b">Shortest</div><div class="t" style="left:548.5px;top:309.7px;font-size:8.30px;color:#1b1b1b;transform-origin:0 0;transform:scaleX(0.86);-webkit-text-stroke:0.07px #1b1b1b">Longest</div><div class="t" style="left:548.5px;top:323.1px;font-size:8.30px;color:#1b1b1b;transform-origin:0 0;transform:scaleX(0.86);-webkit-text-stroke:0.07px #1b1b1b">Cross Product</div>
<div class="a" style="left:1128.0px;top:75.5px;width:67.0px;height:16.0px;background:#f9f9f9;border:1px solid #e2e2e2"></div><div class="a" style="left:1161.5px;top:76.5px;width:1.0px;height:14.0px;background:#e6e6e6;"></div><svg class="a" style="left:1130px;top:76px" width="64" height="15"><circle cx="7.5" cy="9" r="3.6" fill="none" stroke="#777" stroke-width="0.9"/><path d="M6.5 10.8L10.5 3.6L14.5 10.8Z" fill="none" stroke="#777" stroke-width="0.9"/><path d="M17 5.5H24V12.5H17Z M17 5.5L19 3.5H26V10.5L24 12.5 M24 5.5L26 3.5" fill="none" stroke="#777" stroke-width="0.9"/><rect x="37.5" y="4" width="5.5" height="3.8" fill="#7ec0f0" stroke="#2b8ee8" stroke-width="0.8"/><rect x="41" y="9.5" width="6" height="3" fill="#7ec0f0" stroke="#2b8ee8" stroke-width="0.8"/><rect x="52" y="6.5" width="8" height="5" fill="#7ec0f0" stroke="#2b8ee8" stroke-width="0.8"/><path d="M43 6C46 6 47 9 52 9" fill="none" stroke="#2b8ee8" stroke-width="0.7"/></svg><div class="a" style="left:1180.0px;top:97.5px;width:15.0px;height:46.0px;background:#f9f9f9;border:1px solid #e2e2e2"></div><div class="a" style="left:1180.0px;top:147.5px;width:15.0px;height:16.0px;background:#f9f9f9;border:1px solid #e2e2e2"></div><svg class="a" style="left:1180px;top:97px" width="15" height="67"><path d="M4 7V4.5H6.5M8.5 4.5H11V7M11 9V11.5H8.5M6.5 11.5H4V9" fill="none" stroke="#555" stroke-width="1"/><path d="M7.5 19.5V27.5M3.5 23.5H11.5" stroke="#555" stroke-width="1"/><path d="M3.5 38H11.5" stroke="#555" stroke-width="1"/><path d="M7.5 53V63M2.5 58H12.5" stroke="#555" stroke-width="1"/><path d="M5.8 54.8L7.5 52.5L9.2 54.8ZM5.8 61.2L7.5 63.5L9.2 61.2ZM4.3 56.3L2 58L4.3 59.7ZM10.7 56.3L13 58L10.7 59.7Z" fill="#555"/></svg>
<div class="a" style="left:3.0px;top:188.3px;width:13.0px;height:62.0px;background:#323232;"></div>
<div class="t" style="left:7.6px;top:236.5px;font-size:7.8px;color:#cfcfcf;transform-origin:0 0;transform:rotate(-90deg) translate(0,-4.5px)">Library</div>
<svg class="a" style="left:4.5px;top:201px" width="9" height="9"><path d="M4.5 8V1.5M1.8 4L4.5 1.3L7.2 4" stroke="#cfcfcf" stroke-width="1.2" fill="none"/></svg>
<div class="a" style="left:2px;top:20px;width:1px;height:706px;background:#1f2a2e"></div>
<div class="a" style="left:0;top:108px;width:2px;height:20px;background:#8fa3a6"></div>
<div class="a" style="left:1199.5px;top:20px;width:2px;height:706px;background:#2c2c2c"></div>
<div class="a" style="left:3px;top:696px;width:1196.5px;height:30px;background:linear-gradient(#1f1f1f,#1a1a1a 60%,#141414)"></div>
<div class="a" style="left:3px;top:695px;width:1196.5px;height:1px;background:#fdfdfd"></div>
<div class="a" style="left:3px;top:700.5px;width:76px;height:23.5px;background:#262626;border:1px solid #3a3a3a"></div>
<div class="t" style="left:12px;top:707px;font-size:9.6px;color:#d8d8d8">Automatic</div>
<svg class="a" style="left:67px;top:710.5px" width="6" height="4"><path d="M0 0.5H5.4L2.7 3Z" fill="#d0d0d0"/></svg>
<div class="t" style="left:145px;top:708.5px;font-size:7.6px;font-style:italic;color:#9a9a9a">Run completed.</div>
<svg class="a" style="left:1189px;top:716px" width="10" height="10"><path d="M8 2h1v1h-1zM6 4h1v1h-1zM8 4h1v1h-1zM4 6h1v1h-1zM6 6h1v1h-1zM8 6h1v1h-1zM2 8h1v1h-1zM4 8h1v1h-1zM6 8h1v1h-1zM8 8h1v1h-1z" fill="#8a8a8a"/></svg>
</body></html>
